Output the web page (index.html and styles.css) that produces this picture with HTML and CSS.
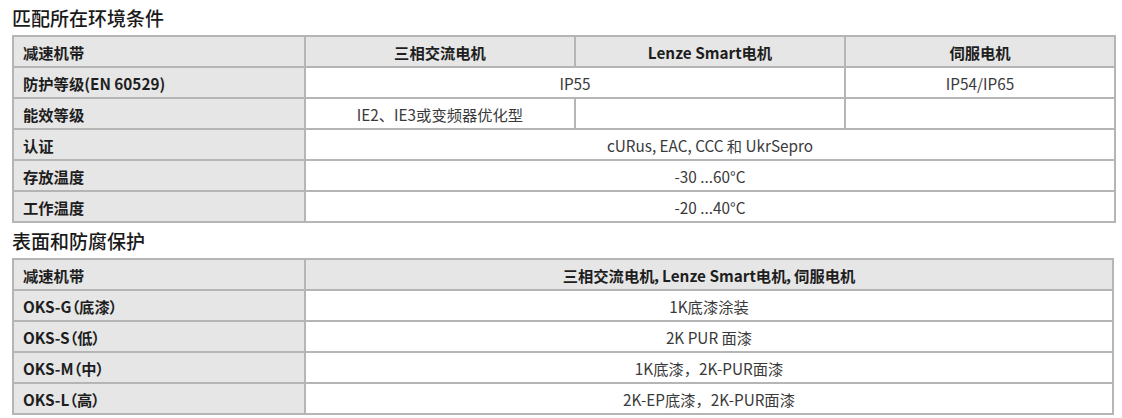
FILE: index.html
```html
<!DOCTYPE html>
<html lang="zh-CN">
<head>
<meta charset="utf-8">
<link rel="stylesheet" href="styles.css">
</head>
<body>
<div class="page">
  <h2 class="title">匹配所在环境条件</h2>
  <table class="spec">
    <colgroup>
      <col class="c-label"><col class="c-val"><col class="c-val"><col class="c-val">
    </colgroup>
    <tr class="head">
      <th class="label">减速机带</th>
      <th>三相交流电机</th>
      <th>Lenze Smart电机</th>
      <th>伺服电机</th>
    </tr>
    <tr>
      <th class="label">防护等级(EN 60529)</th>
      <td colspan="2">IP55</td>
      <td>IP54/IP65</td>
    </tr>
    <tr>
      <th class="label">能效等级</th>
      <td>IE2、IE3或变频器优化型</td>
      <td></td>
      <td></td>
    </tr>
    <tr>
      <th class="label">认证</th>
      <td colspan="3">cURus, EAC, CCC 和 UkrSepro</td>
    </tr>
    <tr>
      <th class="label">存放温度</th>
      <td colspan="3">-30 ...60°C</td>
    </tr>
    <tr>
      <th class="label">工作温度</th>
      <td colspan="3">-20 ...40°C</td>
    </tr>
  </table>

  <h2 class="title title2">表面和防腐保护</h2>
  <table class="spec">
    <colgroup>
      <col class="c-label"><col>
    </colgroup>
    <tr class="head">
      <th class="label">减速机带</th>
      <th class="prop">三相交流电机，Lenze Smart电机，伺服电机</th>
    </tr>
    <tr>
      <th class="label prop">OKS-G（底漆）</th>
      <td>1K底漆涂装</td>
    </tr>
    <tr>
      <th class="label prop">OKS-S（低）</th>
      <td>2K PUR 面漆</td>
    </tr>
    <tr>
      <th class="label prop">OKS-M（中）</th>
      <td>1K底漆，2K-PUR面漆</td>
    </tr>
    <tr>
      <th class="label prop">OKS-L（高）</th>
      <td>2K-EP底漆，2K-PUR面漆</td>
    </tr>
  </table>
</div>
</body>
</html>
```

FILE: styles.css
```css
html, body {
  margin: 0;
  padding: 0;
  background: #ffffff;
}

body {
  font-family: "Noto Sans CJK SC", "Noto Sans", sans-serif;
  color: #333333;
}

.page {
  padding: 0 8px 0 12px;
  width: 1102px;
}

.title {
  margin: 0;
  font-size: 19px;
  font-weight: 500;
  line-height: 35px;
  height: 35px;
  color: #1a1a1a;
}

.title2 {
  height: 35px;
  line-height: 35px;
}

.spec {
  width: 1102px;
  border-collapse: collapse;
  table-layout: fixed;
  font-size: 15.3px;
}

.c-label {
  width: 292px;
}

.c-val {
  width: 270px;
}

.spec th,
.spec td {
  border: 2px solid #b5b5b5;
  height: 29px;
  padding: 0 8px;
  text-align: center;
  font-weight: 400;
  line-height: 20px;
  color: #3a3a3a;
}

.spec .head th {
  background: #e6e6e6;
  font-weight: 700;
  color: #1e1e1e;
}

.spec th.label {
  background: #e6e6e6;
  text-align: left;
  font-weight: 700;
  color: #1e1e1e;
  padding-left: 9px;
}

.spec .prop {
  font-feature-settings: "palt" 1;
}
```
